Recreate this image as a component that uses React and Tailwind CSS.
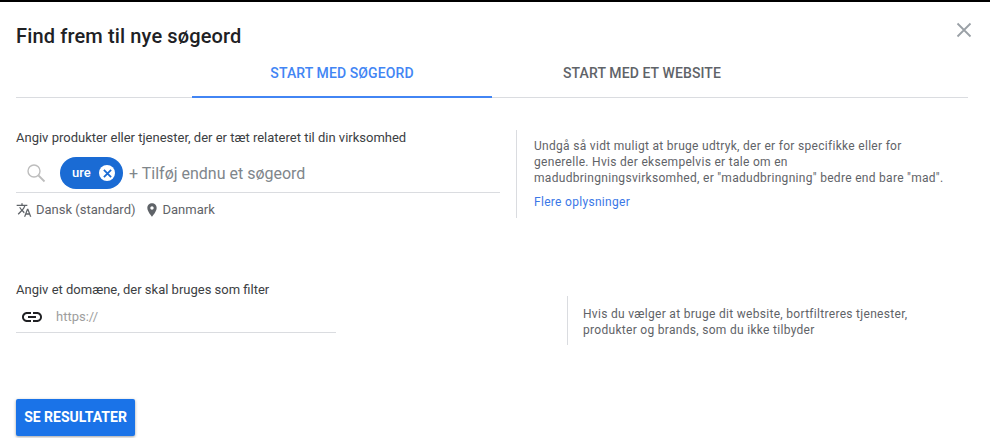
import React from "react";

function Icon({ d, className }) {
  return (
    <svg viewBox="0 0 24 24" className={className} fill="currentColor">
      <path d={d} />
    </svg>
  );
}

const translatePath =
  "M12.87 15.07l-2.54-2.51.03-.03c1.74-1.94 2.98-4.17 3.71-6.53H17V4h-7V2H8v2H1v1.99h11.17C11.5 7.92 10.44 9.75 9 11.35 8.07 10.32 7.3 9.19 6.69 8h-2c.73 1.63 1.73 3.17 2.98 4.56l-5.09 5.02L4 19l5-5 3.11 3.11.76-2.04zM18.5 10h-2L12 22h2l1.12-3h4.75L21 22h2l-4.5-12zm-2.62 7l1.62-4.33L19.12 17h-3.24z";
const placePath =
  "M12 2C8.13 2 5 5.13 5 9c0 5.25 7 13 7 13s7-7.75 7-13c0-3.87-3.13-7-7-7zm0 9.5c-1.38 0-2.5-1.12-2.5-2.5s1.12-2.5 2.5-2.5 2.5 1.12 2.5 2.5-1.12 2.5-2.5 2.5z";
const linkPath =
  "M3.9 12c0-1.71 1.39-3.1 3.1-3.1h4V7H7c-2.76 0-5 2.24-5 5s2.24 5 5 5h4v-1.9H7c-1.71 0-3.1-1.39-3.1-3.1zM8 13h8v-2H8v2zm9-6h-4v1.9h4c1.71 0 3.1 1.39 3.1 3.1s-1.39 3.1-3.1 3.1h-4V17h4c2.76 0 5-2.24 5-5s-2.24-5-5-5z";

function App() {
  return (
    <div className="relative w-[990px] h-[438px] overflow-hidden bg-white border-t-2 border-black font-['Roboto',sans-serif]">
      <button className="absolute left-[956px] top-[20px] text-[#9aa0a6]">
        <svg viewBox="0 0 16 16" className="w-[16px] h-[16px]" stroke="currentColor" strokeWidth="1.8" fill="none">
          <path d="M1.5 1.5l13 13M14.5 1.5l-13 13" />
        </svg>
      </button>

      <div className="pl-4 pr-[22px]">
        <h1 className="pt-[22px] text-[20px] leading-[24px] font-medium tracking-[0.14px] text-[#202124]">
          Find frem til nye søgeord
        </h1>

        <div className="flex mt-[2px] pl-[176px] h-[48px] border-b border-[#dadce0]">
          <div className="w-[300px] h-[48px] flex items-center justify-center border-b-2 border-[#4285f4] text-[14px] font-medium tracking-[0.1px] text-[#4285f4]">
            START MED SØGEORD
          </div>
          <div className="w-[300px] h-[47px] flex items-center justify-center text-[14px] font-medium tracking-[0.1px] text-[#5f6368]">
            START MED ET WEBSITE
          </div>
        </div>

        <div className="flex mt-[30px]">
          <div className="w-[484px]">
            <div className="text-[13px] leading-[16px] text-[#3c4043] mt-[2px]">
              Angiv produkter eller tjenester, der er tæt relateret til din virksomhed
            </div>
            <div className="flex items-center h-[39px] mt-[8px] border-b border-[#dadce0]">
              <svg viewBox="0 0 20 20" className="w-[20px] h-[20px] ml-[10px] text-[#bdbdbd]" fill="none" stroke="currentColor" strokeWidth="1.4">
                <circle cx="8" cy="8" r="6" />
                <path d="M12.5 12.5L18.5 18.5" strokeWidth="1.8" />
              </svg>
              <div className="flex items-center justify-between w-[63px] h-[32px] ml-[14px] pl-[12px] pr-[8px] rounded-full bg-[#1a6bd4]">
                <span className="text-[13px] font-medium text-white">ure</span>
                <span className="flex items-center justify-center w-[16px] h-[16px] rounded-full bg-white">
                  <svg viewBox="0 0 10 10" className="w-[9px] h-[9px] text-[#1a6bd4]" fill="none" stroke="currentColor" strokeWidth="2">
                    <path d="M1 1l8 8M9 1l-8 8" />
                  </svg>
                </span>
              </div>
              <span className="ml-[6px] pt-[2px] text-[16px] text-[#80868b]">+ Tilføj endnu et søgeord</span>
            </div>
            <div className="flex items-center mt-[9px] text-[13px] leading-[16px] text-[#5f6368]">
              <Icon d={translatePath} className="w-[16px] h-[16px] text-[#5f6368]" />
              <span className="ml-[4px]">Dansk (standard)</span>
              <Icon d={placePath} className="w-[16px] h-[16px] ml-[8px] text-[#5f6368]" />
              <span className="ml-[3px]">Danmark</span>
            </div>
          </div>

          <div className="ml-[16px] w-[433px] h-[88px] mt-[2px] pl-[17px] pt-[8px] border-l border-[#dadce0] text-[12px] leading-[16px] tracking-[0.3px] text-[#5f6368]">
            <p>
              Undgå så vidt muligt at bruge udtryk, der er for specifikke eller for generelle. Hvis der eksempelvis er tale om en madudbringningsvirksomhed, er "madudbringning" bedre end bare "mad".
            </p>
            <p className="mt-[8px] text-[#3b78e7]">Flere oplysninger</p>
          </div>
        </div>

        <div className="flex mt-[64px]">
          <div className="w-[320px]">
            <div className="text-[13px] leading-[16px] text-[#3c4043]">
              Angiv et domæne, der skal bruges som filter
            </div>
            <div className="flex items-center h-[31px] mt-[4px] border-b border-[#dadce0]">
              <Icon d={linkPath} className="w-[24px] h-[24px] ml-[4px] text-[#202124]" />
              <span className="ml-[12px] text-[13px] text-[#9e9e9e]">https://</span>
            </div>
          </div>
          <div className="ml-[231px] w-[360px] h-[49px] mt-[14px] pl-[15px] pt-[10px] border-l border-[#dadce0] text-[12px] leading-[16px] tracking-[0.3px] text-[#5f6368]">
            Hvis du vælger at bruge dit website, bortfiltreres tjenester, produkter og brands, som du ikke tilbyder
          </div>
        </div>

        <button className="block mt-[54px] w-[119px] h-[37px] rounded-[2px] bg-[#1a73e8] text-[14px] font-bold text-white shadow-[0_1px_3px_rgba(60,64,67,0.5)]">
          SE RESULTATER
        </button>
      </div>
    </div>
  );
}

export default App;
